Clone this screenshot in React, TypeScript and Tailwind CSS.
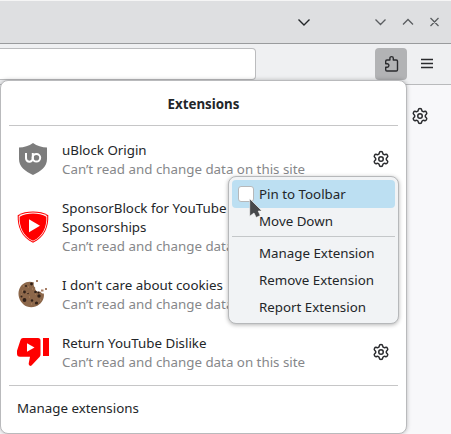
import React from "react";
import { Settings } from "lucide-react";

function Gear() {
  return <Settings size={18} strokeWidth={2} className="text-[#2b2c2f]" />;
}

function Shield() {
  return (
    <svg width="28" height="32" viewBox="0 0 28 32">
      <path d="M14 0C10 3 5 4.300 0 4.500V16c0 8 6 12 14 16 8-4 14-8 14-16V4.500C23 4.300 18 3 14 0Z" fill="#7d7d7d" />
      <path d="M7 10v5.300a3.400 3.400 0 0 0 6.800 0V10" fill="none" stroke="#fff" strokeWidth="2" />
      <circle cx="17.400" cy="14.800" r="3.800" fill="none" stroke="#fff" strokeWidth="2" />
    </svg>
  );
}

function Sponsor() {
  const d = "M16 .5C10.500 .5 5 1.500 .7 4.200.2 15.500 4.500 26.500 16 31.700 27.500 26.500 31.800 15.500 31.300 4.200 27 1.500 21.500 .5 16 .5Z";
  return (
    <svg width="32" height="32" viewBox="0 0 32 32">
      <path d={d} fill="#f00" />
      <path d={d} transform="translate(1.100 1.100) scale(.93)" fill="#fff" />
      <path d={d} transform="translate(2 2) scale(.875)" fill="#f00" />
      <path d="M12 8.300v13L23 14.800Z" fill="#fff" />
    </svg>
  );
}

function Cookie() {
  return (
    <svg width="30" height="28" viewBox="0 0 30 28">
      <path d="M16 2.500C10 0 3 3 1 10-1 17 3 24 9 26.500c7 2.500 15-1.500 16.700-9 .3-1.500.3-2.500.1-4-1.500.2-2.800-.7-3.600-2-3 1-5.500-1-5-4-1.500-1-1.900-3-1.200-5Z" fill="#8c674a" />
      <path d="M5 6h1M10 7h1M6 20h1M11 17h1M17 14h1M22 20h1M13 24h1M3 15h1M9 13h1M18 24h1M14 9h1M4 11h1" stroke="#b48a65" />
      <g fill="#302018">
        <circle cx="13.500" cy="4" r="1.400" /><circle cx="8" cy="6" r="1" />
        <circle cx="6.500" cy="12" r="1.400" /><circle cx="10" cy="13.500" r=".8" />
        <circle cx="17.500" cy="12" r="1.300" /><circle cx="21" cy="16" r="1.700" />
        <circle cx="6.500" cy="20" r="1.900" /><circle cx="14" cy="20.500" r="1.200" />
        <circle cx="18.500" cy="23" r="1.600" /><circle cx="3.500" cy="16.500" r="1" />
        <circle cx="20.500" cy="12.500" r="1.100" />
      </g>
      <path d="M18 0h2v2h-2ZM23 9.500h2.500v2H23ZM27 8h2v2h-2Z" fill="#a77f67" />
    </svg>
  );
}

function Dislike() {
  return (
    <svg width="32" height="30" viewBox="0 0 32 30">
      <path d="M6 1h15q2.500 0 2.500 2.500v14q0 1.500-1 2.500l-8 8.500q-1 .8-2 0-1-.8-.8-2l1.300-6.800H3q-3 0-3-3v-3L3.500 3Q4.200 1 6 1Z" fill="#f00" />
      <path d="M26 1h6v18h-6Z" fill="#f00" />
      <path d="M10 6.200v8.600l7.500-4.300Z" fill="#fff" />
    </svg>
  );
}

type RowProps = { icon: React.ReactNode; title: React.ReactNode; gear?: boolean };

function Row({ icon, title, gear }: RowProps) {
  return (
    <div className="flex items-center">
      <div className="flex w-8 shrink-0 justify-center">{icon}</div>
      <div className="-mb-px ml-[13px] flex-1 pt-px whitespace-nowrap">
        <div>{title}</div>
        <div className="text-[#86878a]">Can’t read and change data on this site</div>
      </div>
      {gear && <Gear />}
    </div>
  );
}

function Item({ children }: { children: React.ReactNode }) {
  return <div className="flex h-[27px] items-center pl-[27px]">{children}</div>;
}

export default function App() {
  return (
    <div className="relative flex h-[434px] w-[451px] flex-col overflow-hidden bg-[#f8f8fa] font-['Noto_Sans',sans-serif] text-[13.333px] leading-[19px] text-[#232629]">
      <div className="flex h-11 shrink-0 items-center justify-end border-t border-b border-t-[#f5f5f5] border-b-[#999b9d] bg-[#dedfe1]">
        <svg width="155" height="14" viewBox="0 0 155 14" fill="none" stroke="#5b5e61" strokeWidth="1.300">
          <path d="m2.500 4.500 5.500 5.500 5.500-5.500" stroke="#232629" strokeWidth="1.400" />
          <path d="m79.500 4.500 5 5 5-5m17.500 5 5-5 5 5m17.500-6.500 8 8m0-8-8 8" />
        </svg>
      </div>
      <div className="flex h-[41px] shrink-0 border-b border-[#b9babc] bg-[#eff0f2]">
        <div className="mt-1 h-8 w-64 rounded-r-[4px] border border-l-0 border-[#bbbcbe] bg-white" />
        <div className="mt-1 ml-[119px] flex h-8 w-8 items-center justify-center rounded-[4px] bg-[#b2b3b5]">
          <svg width="16" height="18" viewBox="0 0 16 18" fill="none" stroke="#2a2b2e" strokeWidth="1.400" strokeLinejoin="round">
            <path d="M2.700 7.700V6.200q0-1.200 1.200-1.200h3V3.300a1.700 1.700 0 0 1 3.400 0V5h3q1.200 0 1.200 1.200v8.600q0 1.200-1.200 1.200H3.900q-1.200 0-1.200-1.200v-2.600h1.500a1.700 1.700 0 0 0 0-3.400H2.700Z" />
          </svg>
        </div>
        <svg className="mt-[14px] ml-[14px]" width="12" height="11" viewBox="0 0 12 11" fill="none" stroke="#2a2b2e" strokeWidth="1.300">
          <path d="M0 1.500h12M0 5.500h12M0 9.500h12" />
        </svg>
      </div>
      <div className="flex justify-end pt-[22px] pr-[22px]"><Gear /></div>

      <div className="absolute top-20 left-0 h-[354px] w-[407px] rounded-[8px] border border-[#b9babc] bg-white px-2 shadow-[0_0_4px_rgba(0,0,0,0.25)]">
        <div className="flex h-[45px] items-center justify-center border-b border-[#c6c6c7] pt-[2px] font-bold">Extensions</div>
        <div className="flex h-[260px] flex-col gap-5 border-b border-[#c6c6c7] pt-[14px] pr-2 pl-2">
          <Row icon={<Shield />} title="uBlock Origin" gear />
          <Row icon={<Sponsor />} title={<>SponsorBlock for YouTube<br />Sponsorships</>} />
          <Row icon={<Cookie />} title="I don't care about cookies" />
          <Row icon={<Dislike />} title="Return YouTube Dislike" gear />
        </div>
        <div className="pt-[13px] pl-2">Manage extensions</div>
      </div>

      <div className="absolute top-[176px] left-[228px] h-[148px] w-[171px] rounded-[8px] border border-[#b6b8ba] bg-[#f1f3f5] p-[3px] shadow-[0_1px_4px_rgba(0,0,0,0.3)]">
        <div className="flex h-7 items-center rounded-[4px] bg-[#bcdff2] pl-[6px]">
          <div className="mr-[5px] h-4 w-4 rounded-[3px] border border-[#b6b8ba] bg-white" />
          <span className="pt-px">Pin to Toolbar</span>
        </div>
        <Item>Move Down</Item>
        <div className="mt-px mb-[3px] h-px bg-[#c4c7c9]" />
        <Item>Manage Extension</Item>
        <Item>Remove Extension</Item>
        <Item>Report Extension</Item>
      </div>
      <svg className="absolute top-[198px] left-[249px]" width="14" height="21" viewBox="0 0 14 21">
        <path d="M.7 .7v17.500l4.300-3.200 2.200 4.500 4-2-2-4.500h3.800Z" fill="#47494c" stroke="#fff" strokeWidth=".6" />
      </svg>
    </div>
  );
}
